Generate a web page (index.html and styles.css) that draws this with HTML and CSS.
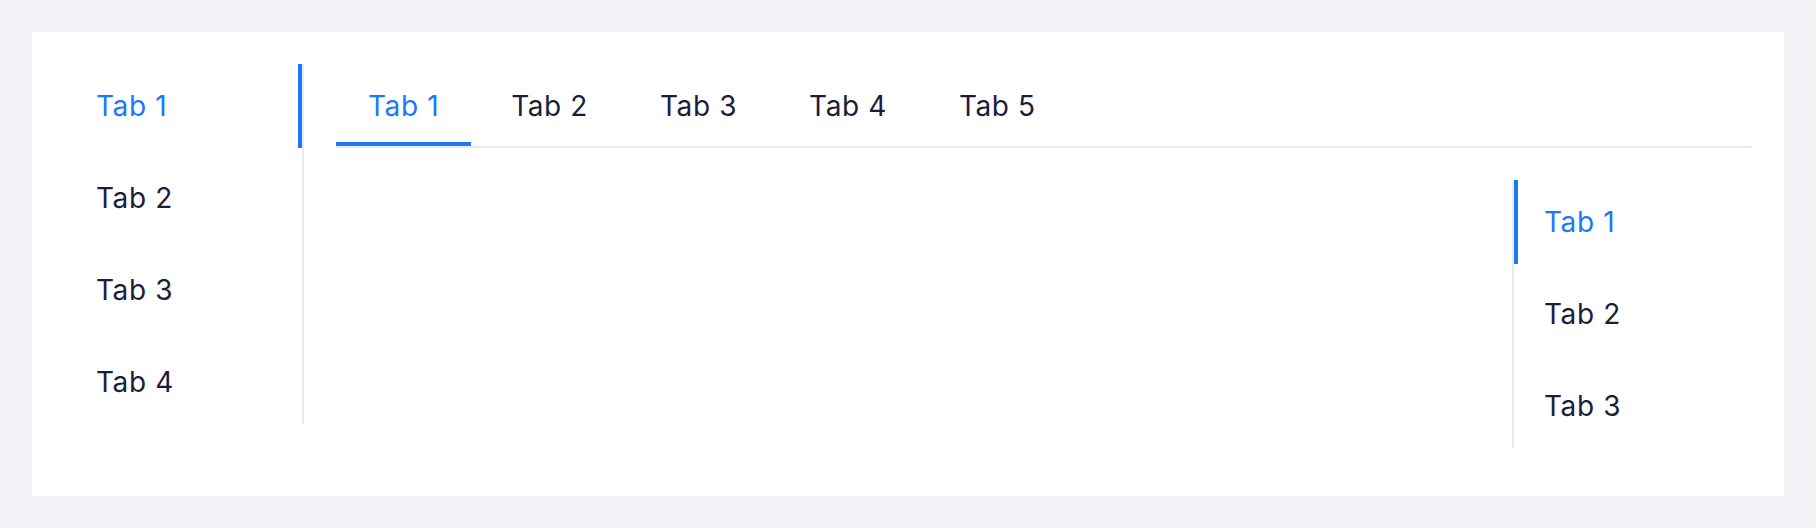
FILE: index.html
```html
<!DOCTYPE html>
<html lang="en">
<head>
<meta charset="utf-8">
<title>Tabs</title>
<link rel="stylesheet" href="styles.css">
</head>
<body>
<div class="card">
  <div class="vtabs vtabs-left">
    <div class="vtab active">Tab 1</div>
    <div class="vtab">Tab 2</div>
    <div class="vtab">Tab 3</div>
    <div class="vtab">Tab 4</div>
  </div>
  <div class="main">
    <div class="htabs">
      <div class="htab active">Tab 1</div>
      <div class="htab">Tab 2</div>
      <div class="htab">Tab 3</div>
      <div class="htab">Tab 4</div>
      <div class="htab">Tab 5</div>
    </div>
    <div class="vtabs vtabs-right">
      <div class="vtab active">Tab 1</div>
      <div class="vtab">Tab 2</div>
      <div class="vtab">Tab 3</div>
    </div>
  </div>
</div>
</body>
</html>
```
FILE: styles.css
```css
* { box-sizing: border-box; }
html, body { margin: 0; }
body {
  background: #f3f4f8;
  padding: 32px;
  font-family: Inter, "Noto Sans", sans-serif;
  color: #1b1e3a;
}
.card {
  background: #ffffff;
  height: 464px;
  padding: 32px 32px 48px;
  display: flex;
  align-items: flex-start;
  gap: 32px;
}
.vtabs {
  width: 240px;
  display: flex;
  flex-direction: column;
  gap: 8px;
}
.vtabs-left { border-right: 2px solid #e8eaef; }
.vtabs-right {
  align-self: flex-end;
  margin-top: 32px;
  border-left: 2px solid #e8eaef;
}
.vtab {
  height: 84px;
  display: flex;
  align-items: center;
  font-size: 28px;
  line-height: 1;
  letter-spacing: 0.6px;
}
.vtabs-left .vtab {
  padding-left: 32px;
  border-right: 4px solid transparent;
}
.vtabs-right .vtab {
  padding-left: 26px;
  border-left: 4px solid transparent;
}
.vtab.active { color: #1a79f7; }
.vtabs-left .vtab.active { border-right-color: #1a79f7; }
.vtabs-right .vtab.active { border-left-color: #1a79f7; }
.main {
  flex: 1;
  display: flex;
  flex-direction: column;
}
.htabs {
  display: flex;
  gap: 8px;
  height: 84px;
  border-bottom: 2px solid #e8eaef;
}
.htab {
  height: 82px;
  padding: 5px 32px 0;
  display: flex;
  align-items: center;
  font-size: 28px;
  line-height: 1;
  letter-spacing: 0.6px;
  border-bottom: 4px solid transparent;
}
.htab.active {
  color: #1a79f7;
  border-bottom-color: #1a79f7;
}
```
